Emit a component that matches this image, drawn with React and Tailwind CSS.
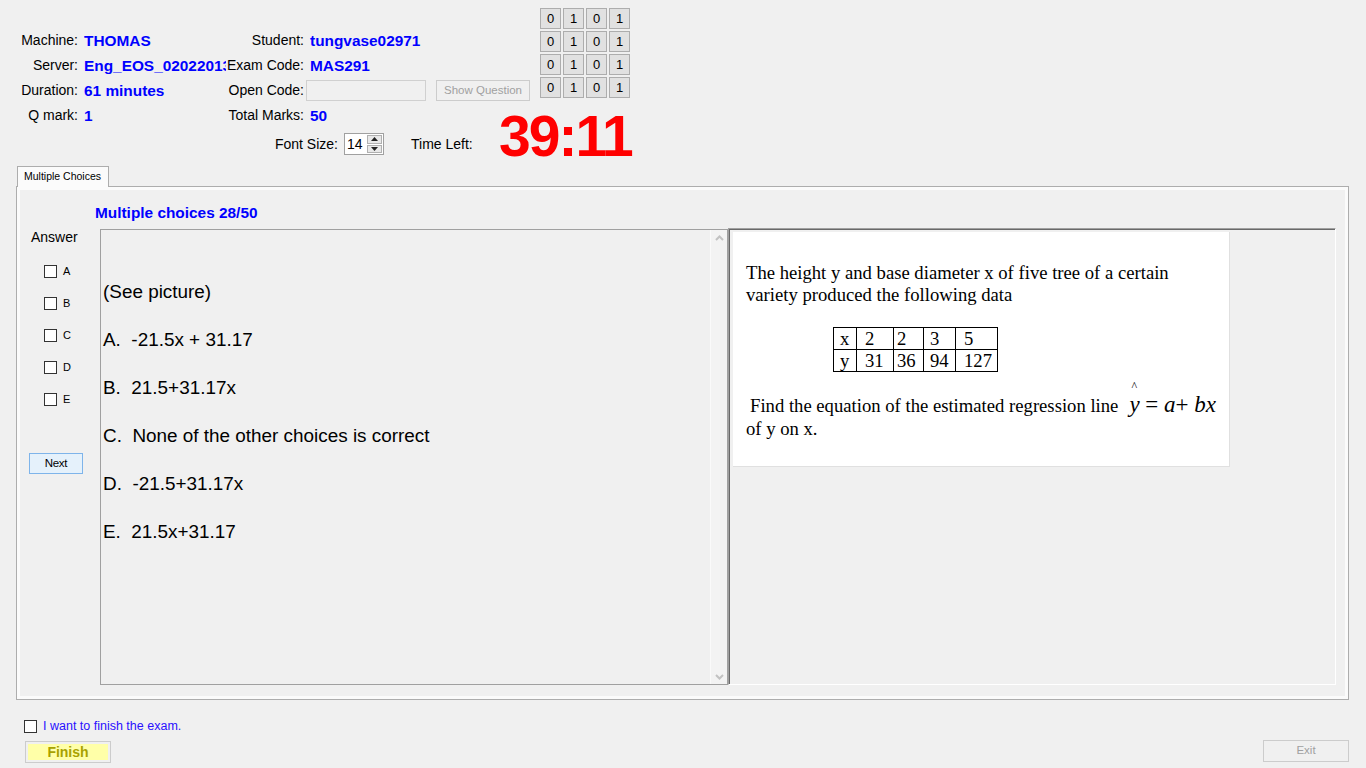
import React from "react";

const LBL = "w-[78px] shrink-0 text-right text-[14px] text-black whitespace-nowrap";
const VAL = "font-bold text-[15.4px] text-[#0000ff] whitespace-nowrap";

function InfoRow({ l1, v1, l2, v2 }) {
  return (
    <div className="flex h-[25px] items-center">
      <div className={LBL}>{l1}</div>
      <div className={`${VAL} ml-[6px] w-[142px] shrink-0 overflow-hidden`}>{v1}</div>
      <div className={LBL}>{l2}</div>
      <div className={`${VAL} ml-[6px]`}>{v2}</div>
    </div>
  );
}

function GridBtn({ v }) {
  return (
    <div className="flex h-[21px] w-[21px] items-center justify-center border border-[#adadad] bg-[#e1e1e1] text-[13px] text-black">
      {v}
    </div>
  );
}

function Check() {
  return <div className="h-[13px] w-[13px] shrink-0 border border-[#333333] bg-white" />;
}

function Chevron({ down }) {
  return (
    <svg width="9" height="6" viewBox="0 0 9 6">
      <polyline
        points={down ? "1,1 4.5,4.5 8,1" : "1,5 4.5,1.5 8,5"}
        fill="none"
        stroke="#c2c2c2"
        strokeWidth="2"
      />
    </svg>
  );
}

function Cell({ children, pl }) {
  return (
    <div className={`h-[22px] border-r border-b border-black leading-[21px] ${pl}`}>{children}</div>
  );
}

export default function App() {
  const grid = [];
  for (let r = 0; r < 4; r++) {
    ["0", "1", "0", "1"].forEach((v, i) => grid.push(<GridBtn key={`${r}-${i}`} v={v} />));
  }
  const answers = ["A", "B", "C", "D", "E"];
  const choices = [
    "(See picture)",
    "A.  -21.5x + 31.17",
    "B.  21.5+31.17x",
    "C.  None of the other choices is correct",
    "D.  -21.5+31.17x",
    "E.  21.5x+31.17",
  ];
  return (
    <div className="h-[768px] w-[1366px] overflow-hidden bg-[#f0f0f0] font-['Liberation_Sans',Arial,sans-serif] text-black">
      {/* Header */}
      <div className="flex items-start">
        <div className="w-[540px] shrink-0 pt-[28px]">
          <InfoRow l1="Machine:" v1="THOMAS" l2="Student:" v2="tungvase02971" />
          <InfoRow l1="Server:" v1="Eng_EOS_02022013" l2="Exam Code:" v2="MAS291" />
          <div className="flex h-[25px] items-center">
            <div className={LBL}>Duration:</div>
            <div className={`${VAL} ml-[6px] w-[142px] shrink-0 overflow-hidden`}>61 minutes</div>
            <div className={LBL}>Open Code:</div>
            <div className="ml-[2px] h-[21px] w-[120px] border border-[#d0d0d0] bg-[#f0f0f0]" />
            <div className="ml-[10px] flex h-[21px] w-[94px] items-center justify-center border border-[#cccccc] bg-[#f0f0f0] text-[11.5px] text-[#a0a0a0]">
              Show Question
            </div>
          </div>
          <InfoRow l1="Q mark:" v1="1" l2="Total Marks:" v2="50" />
        </div>
        <div className="mt-[8px] grid grid-cols-[21px_21px_21px_21px] content-start gap-[2px]">{grid}</div>
      </div>

      {/* Font size / timer */}
      <div className="flex h-[32px] items-center">
        <div className="w-[338px] shrink-0 text-right text-[14px]">Font Size:</div>
        <div className="ml-[6px] flex h-[22px] w-[40px] border border-[#a0a0a0] bg-white">
          <div className="flex-1 pl-[2px] text-[14px] leading-[20px]">14</div>
          <div className="my-[1px] mr-[1px] flex w-[15px] flex-col gap-[1px]">
            <div className="flex flex-1 items-center justify-center border border-[#b0b0b0] bg-[#e8e8e8]">
              <svg width="7" height="4" viewBox="0 0 7 4"><polygon points="3.5,0 7,4 0,4" fill="#222" /></svg>
            </div>
            <div className="flex flex-1 items-center justify-center border border-[#b0b0b0] bg-[#e8e8e8]">
              <svg width="7" height="4" viewBox="0 0 7 4"><polygon points="0,0 7,0 3.5,4" fill="#222" /></svg>
            </div>
          </div>
        </div>
        <div className="ml-[27px] w-[88px] shrink-0 text-[14px]">Time Left:</div>
        <div className="mb-[15px] text-[57px] font-bold leading-none tracking-[-2px] text-[#ff0000]">39:11</div>
      </div>

      {/* Tab control */}
      <div className="mt-[6px] pl-[16px]">
        <div className="relative z-10 -mb-px ml-[1px] flex h-[21px] w-[92px] items-center border border-b-0 border-[#adadad] bg-[#fbfbfb] pl-[6px] text-[10.5px]">
          Multiple Choices
        </div>
        <div className="h-[514px] w-[1333px] border border-[#adadad] bg-[#fbfbfb] p-[3px]">
          <div className="flex h-full flex-col bg-[#f0f0f0]">
            <div className="pl-[75px] pt-[15px] text-[15.4px] font-bold leading-[16px] text-[#0000ff]">
              Multiple choices 28/50
            </div>
            <div className="mt-[7px] flex">
              {/* Answer column */}
              <div className="w-[80px] shrink-0">
                <div className="mt-[1px] pl-[11px] text-[14px] leading-[16px]">Answer</div>
                <div className="mt-[10px]">
                  {answers.map((a) => (
                    <div key={a} className="flex h-[32px] items-center pl-[24px]">
                      <Check />
                      <span className="ml-[6px] text-[11px]">{a}</span>
                    </div>
                  ))}
                </div>
                <div className="ml-[9px] mt-[38px] flex h-[21px] w-[54px] items-center justify-center border border-[#7eb4ea] bg-[#e5f1fb] text-[11.5px] tracking-[-0.3px]">
                  Next
                </div>
              </div>

              {/* Question box */}
              <div className="mt-[1px] flex h-[456px] w-[628px] shrink-0 border border-[#a0a0a0] bg-[#f0f0f0]">
                <div className="flex-1 pl-[2px] pt-[38px] text-[18.9px]">
                  {choices.map((c) => (
                    <div key={c} className="flex h-[48px] items-center whitespace-pre">
                      {c}
                    </div>
                  ))}
                </div>
                <div className="flex w-[17px] flex-col items-center justify-between border-l border-[#fafafa] bg-[#f3f3f3] pb-[4px] pt-[5px]">
                  <Chevron />
                  <Chevron down />
                </div>
              </div>

              {/* Picture panel */}
              <div className="h-[457px] w-[608px] shrink-0 border border-[#a0a0a0] border-r-white border-b-white">
                <div className="h-full border-l border-t border-[#696969] pl-[3px] pt-[2px]">
                  <div className="h-[235px] w-[497px] border-b border-r border-[#e0e0e0] bg-white font-['Liberation_Serif','Times_New_Roman',serif] text-[18.67px] leading-[22px] text-black">
                    <div className="pl-[13px] pt-[30px]">
                      <div className="whitespace-nowrap">The height y and base diameter x of five tree of a certain</div>
                      <div>variety produced the following data</div>
                    </div>
                    <div className="ml-[100px] mt-[21px] grid w-fit grid-cols-[23px_37px_30px_32px_42px] border-l border-t border-black">
                      <Cell pl="pl-[6px]">x</Cell>
                      <Cell pl="pl-[8px]">2</Cell>
                      <Cell pl="pl-[3px]">2</Cell>
                      <Cell pl="pl-[6px]">3</Cell>
                      <Cell pl="pl-[8px]">5</Cell>
                      <Cell pl="pl-[6px]">y</Cell>
                      <Cell pl="pl-[8px]">31</Cell>
                      <Cell pl="pl-[3px]">36</Cell>
                      <Cell pl="pl-[6px]">94</Cell>
                      <Cell pl="pl-[8px]">127</Cell>
                    </div>
                    <div className="mt-[22px] flex h-[22px] items-baseline whitespace-nowrap pl-[17px]">
                      <span>Find the equation of the estimated regression line</span>
                      <span className="ml-[11px] text-[23px]">
                        <span className="relative italic">
                          y
                          <span className="absolute -top-[17px] left-[2px] text-[12px] not-italic">^</span>
                        </span>
                        <span> = </span>
                        <span className="italic">a</span>
                        <span>+ </span>
                        <span className="italic">bx</span>
                      </span>
                    </div>
                    <div className="mt-[2px] pl-[13px]">of y on x.</div>
                  </div>
                </div>
              </div>
            </div>
          </div>
        </div>
      </div>

      {/* Bottom */}
      <div className="mt-[18px] flex h-[16px] items-center pl-[24px]">
        <Check />
        <span className="ml-[6px] text-[12.5px] text-[#2a10ff]">I want to finish the exam.</span>
      </div>
      <div className="mt-[6px] flex items-start justify-between pl-[25px] pr-[17px]">
        <div className="mt-[1px] h-[22px] w-[86px] border border-[#cccccc] bg-[#f0f0f0] p-[2px]">
          <div className="flex h-full items-center justify-center bg-[#ffffa8] text-[14px] font-bold text-[#a8a200]">
            Finish
          </div>
        </div>
        <div className="flex h-[22px] w-[86px] items-center justify-center border border-[#cccccc] bg-[#f0f0f0] text-[11.5px] text-[#a0a0a0]">
          Exit
        </div>
      </div>
    </div>
  );
}
